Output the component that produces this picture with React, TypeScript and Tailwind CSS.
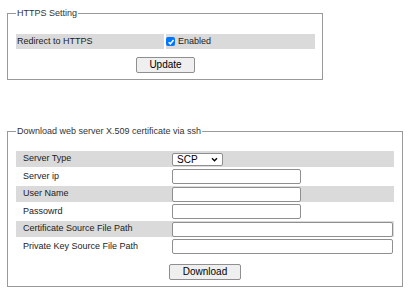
export default function App() {
    const sshRows = [
        { label: 'Server Type', grey: true, kind: 'select' },
        { label: 'Server ip', grey: false, kind: 'short' },
        { label: 'User Name', grey: true, kind: 'short' },
        { label: 'Passowrd', grey: false, kind: 'short' },
        { label: 'Certificate Source File Path', grey: true, kind: 'long' },
        { label: 'Private Key Source File Path', grey: false, kind: 'long' },
    ];

    return (
        <main className="min-h-[307px] w-[415px] bg-white pl-[7px] pt-[8px] font-['Liberation_Sans',Arial,sans-serif] text-[9px] text-[#222]">
            <fieldset className="w-[316px] border border-[#999] pl-[8px] pr-[7px] pt-[15px] pb-[6px]">
                <legend className="px-[1px] leading-[11px] text-[#333]">HTTPS Setting</legend>
                <div className="flex h-[15px] gap-[2px]">
                    <div className="flex w-[148px] items-center bg-[#dadada] pl-[1px]">Redirect to HTTPS</div>
                    <div className="flex flex-1 items-center gap-[3px] bg-[#dadada]">
                        <span className="flex h-[9px] w-[9px] items-center justify-center rounded-[2px] bg-[#0075ff]">
                            <svg viewBox="0 0 10 10" className="h-[8px] w-[8px]">
                                <path d="M2 5.2 L4.2 7.3 L8.2 2.6" fill="none" stroke="white" strokeWidth="1.8" />
                            </svg>
                        </span>
                        <span>Enabled</span>
                    </div>
                </div>
                <div className="mt-[8px] flex justify-center">
                    <button className="h-[16px] w-[59px] rounded-[2px] border border-[#8f8f8f] bg-[#efefef] text-[10px] leading-none text-black">Update</button>
                </div>
            </fieldset>

            <fieldset className="mt-[46px] w-[396px] border border-[#999] pl-[8px] pr-[8px] pt-[14px] pb-[6px]">
                <legend className="px-[1px] leading-[11px] text-[#333]">Download web server X.509 certificate via ssh</legend>
                <div className="flex flex-col gap-[1.5px]">
                    {sshRows.map((row) => (
                        <div key={row.label} className={row.grey ? 'flex h-[16px] bg-[#dadada]' : 'flex h-[16px]'}>
                            <div className="flex w-[156px] items-center pl-[7px]">{row.label}</div>
                            <div className="flex flex-1 items-center">
                                {row.kind === 'select' && (
                                    <div className="flex h-[13px] w-[51px] items-center justify-between rounded-[2px] border border-[#8f8f8f] bg-white pl-[4px] pr-[4px] text-[10px] text-black">
                                        <span>SCP</span>
                                        <svg viewBox="0 0 8 6" className="h-[5px] w-[7px]">
                                            <path d="M1 1.5 L4 4.5 L7 1.5" fill="none" stroke="black" strokeWidth="1.6" />
                                        </svg>
                                    </div>
                                )}
                                {row.kind === 'short' && (
                                    <div className="h-[15px] w-[129px] rounded-[2px] border border-[#8f8f8f] bg-white" />
                                )}
                                {row.kind === 'long' && (
                                    <div className="h-[15px] w-[221px] rounded-[2px] border border-[#8f8f8f] bg-white" />
                                )}
                            </div>
                        </div>
                    ))}
                </div>
                <div className="mt-[9px] flex justify-center">
                    <button className="h-[16px] w-[72px] rounded-[2px] border border-[#8f8f8f] bg-[#efefef] text-[10px] leading-none text-black">Download</button>
                </div>
            </fieldset>
        </main>
    );
}
